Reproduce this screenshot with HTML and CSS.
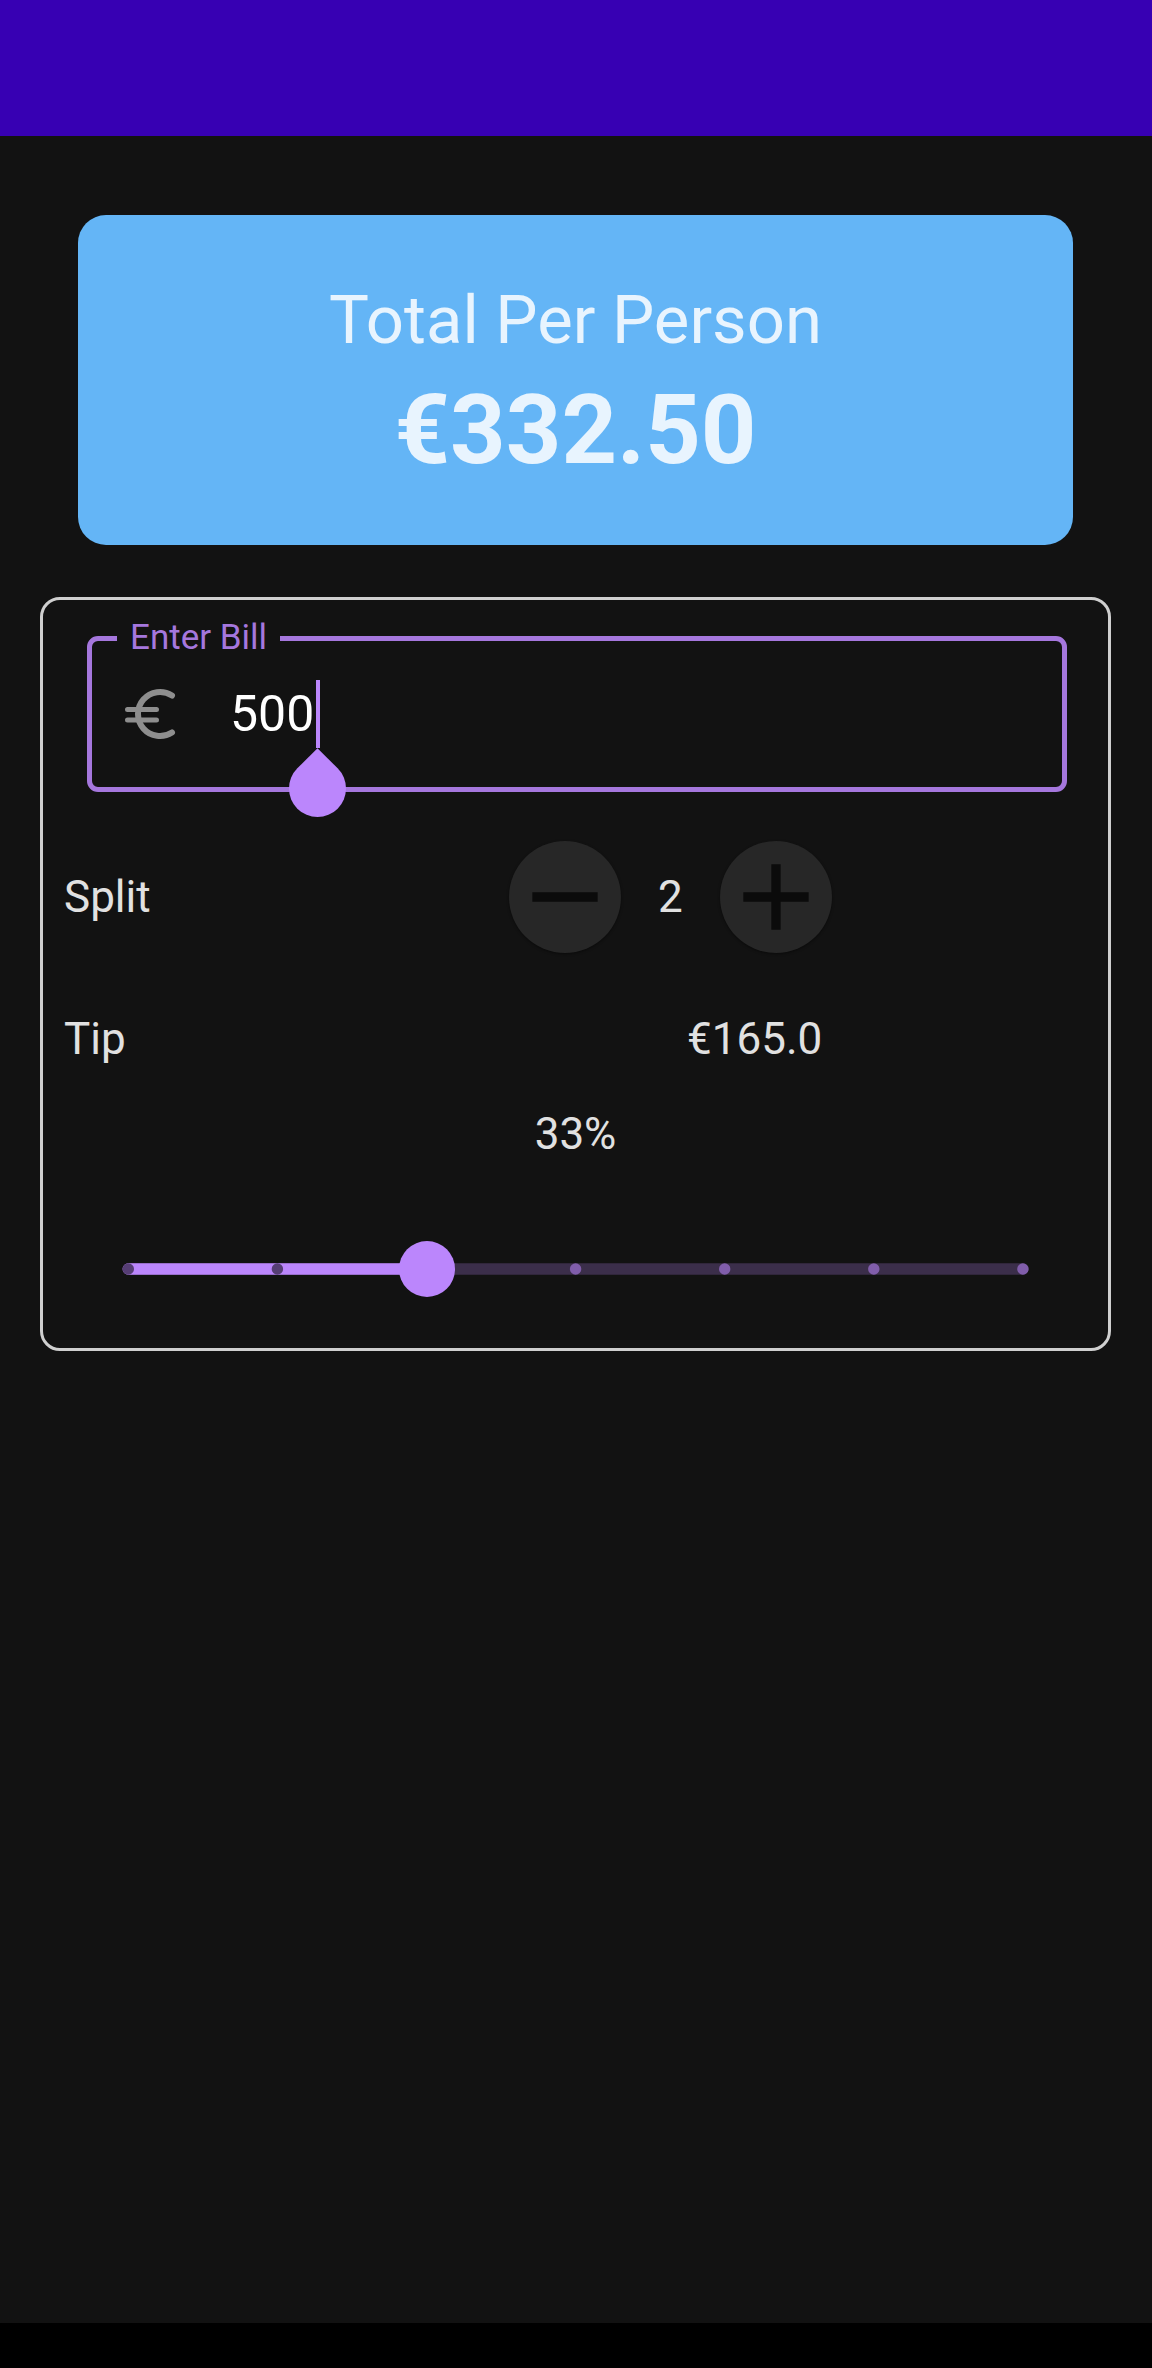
FILE: index.html
```html
<!DOCTYPE html>
<html lang="en">
<head>
<meta charset="utf-8">
<title>Tip Calculator</title>
<link rel="stylesheet" href="styles.css">
</head>
<body>
<div class="screen">
  <header class="topbar"></header>
  <main class="content">
    <section class="total-card">
      <div class="total-label">Total Per Person</div>
      <div class="total-amount">€332.50</div>
    </section>
    <section class="bill-card">
      <div class="bill-field">
        <span class="field-label">Enter Bill</span>
        <svg class="euro-icon" width="52" height="52" viewBox="0 0 52 52" aria-hidden="true">
          <path d="M47.98 7.55 A22 22 0 1 0 47.98 44.45" fill="none" stroke="currentColor" stroke-width="6" stroke-linecap="round"/>
          <path d="M3.5 21.5 H32.5 M3.5 32 H32.5" fill="none" stroke="currentColor" stroke-width="5" stroke-linecap="round"/>
        </svg>
        <span class="field-value">500</span>
        <span class="cursor"><span class="handle"></span></span>
      </div>
      <div class="split-row">
        <span class="row-label split-label">Split</span>
        <div class="stepper">
          <button class="round-btn" aria-label="Decrease">
            <svg width="112" height="112" viewBox="0 0 24 24"><path d="M19 13H5v-2h14v2z"/></svg>
          </button>
          <span class="count">2</span>
          <button class="round-btn" aria-label="Increase">
            <svg width="112" height="112" viewBox="0 0 24 24"><path d="M19 13h-6v6h-2v-6H5v-2h6V5h2v6h6v2z"/></svg>
          </button>
        </div>
      </div>
      <div class="tip-row">
        <span class="row-label tip-label">Tip</span>
        <span class="tip-amount">€165.0</span>
      </div>
      <div class="tip-percent">33%</div>
      <div class="slider">
        <svg width="951" height="56" viewBox="0 0 951 56" aria-hidden="true">
          <line x1="28.3" y1="28" x2="922.9" y2="28" stroke="#3B2E4A" stroke-width="11.4" stroke-linecap="round"/>
          <line x1="28.3" y1="28" x2="327" y2="28" stroke="#BB86FC" stroke-width="11.4" stroke-linecap="round"/>
          <circle cx="28.3" cy="28" r="5.7" fill="#563E74"/>
          <circle cx="177.4" cy="28" r="5.7" fill="#563E74"/>
          <circle cx="326.5" cy="28" r="5.7" fill="#563E74"/>
          <circle cx="475.6" cy="28" r="5.7" fill="#805DAA"/>
          <circle cx="624.7" cy="28" r="5.7" fill="#805DAA"/>
          <circle cx="773.8" cy="28" r="5.7" fill="#805DAA"/>
          <circle cx="922.9" cy="28" r="5.7" fill="#805DAA"/>
          <circle cx="327" cy="28" r="28" fill="#BB86FC"/>
        </svg>
      </div>
    </section>
  </main>
  <footer class="navbar"></footer>
</div>
</body>
</html>
```
FILE: styles.css
```css
html, body {
  margin: 0;
  padding: 0;
  background: #121212;
}

body {
  font-family: Roboto, "Noto Sans", "Liberation Sans", sans-serif;
}

.screen {
  width: 1152px;
  height: 2368px;
  display: flex;
  flex-direction: column;
  overflow: hidden;
}

.topbar {
  flex: none;
  height: 136px;
  background: #3700B3;
}

.content {
  flex: 1;
  display: flex;
  flex-direction: column;
  align-items: flex-start;
  background: #121212;
  padding-top: 79px;
}

.navbar {
  flex: none;
  height: 45px;
  background: #000;
}

/* Total card */
.total-card {
  box-sizing: border-box;
  margin-left: 78px;
  width: 995px;
  height: 330px;
  padding-top: 66px;
  border-radius: 28px;
  background: #64B5F6;
  color: #E8F4FE;
  text-align: center;
}

.total-label {
  font-size: 67px;
  font-weight: 400;
  line-height: normal;
}

.total-amount {
  margin-top: 14px;
  font-size: 97px;
  font-weight: 700;
  line-height: normal;
}

/* Bill card */
.bill-card {
  box-sizing: border-box;
  margin-top: 52px;
  margin-left: 40px;
  width: 1071px;
  border: 3px solid #CFCFCF;
  border-radius: 20px;
  padding: 36px 0 51px 0;
  color: #E1E1E1;
}

.bill-field {
  position: relative;
  box-sizing: border-box;
  margin-left: 44px;
  width: 980px;
  height: 156px;
  border: 5px solid #A577DD;
  border-radius: 11px;
  display: flex;
  align-items: center;
}

.field-label {
  position: absolute;
  top: -24.5px;
  left: 25px;
  padding: 0 13px;
  background: #121212;
  color: #A577DD;
  font-size: 35px;
  line-height: normal;
}

.euro-icon {
  flex: none;
  margin-left: 32px;
  color: #8E8E8E;
}

.field-value {
  margin-left: 54px;
  font-size: 50px;
  line-height: normal;
  color: #FFFFFF;
}

.cursor {
  position: relative;
  flex: none;
  margin-left: 1.5px;
  width: 4px;
  height: 68px;
  background: #BB86FC;
}

.handle {
  position: absolute;
  left: -26.5px;
  top: 79.8px;
  width: 57px;
  height: 57px;
  background: #BB86FC;
  border-radius: 0 50% 50% 50%;
  transform: rotate(45deg);
}

/* Split row */
.split-row {
  margin-top: 49px;
  padding-left: 21px;
  height: 112px;
  display: flex;
  align-items: center;
}

.row-label {
  font-size: 44px;
  line-height: normal;
}

.split-label {
  flex: none;
  width: 445px;
}

.stepper {
  display: flex;
  align-items: center;
}

.round-btn {
  width: 112px;
  height: 112px;
  padding: 0;
  border: none;
  border-radius: 50%;
  background: #272727;
  box-shadow: 0 1px 3px rgba(0, 0, 0, 0.45);
  display: flex;
  align-items: center;
  justify-content: center;
}

.round-btn svg {
  fill: #0B0B0B;
  display: block;
}

.count {
  margin: 0 37px;
  font-size: 44px;
  line-height: normal;
}

/* Tip row */
.tip-row {
  margin-top: 60px;
  padding-left: 21px;
  display: flex;
  align-items: baseline;
}

.tip-label {
  flex: none;
  width: 623px;
}

.tip-amount {
  font-size: 44px;
  line-height: normal;
}

.tip-percent {
  margin-top: 43px;
  text-align: center;
  font-size: 44px;
  line-height: normal;
}

.slider {
  margin-top: 81px;
  margin-left: 57px;
  width: 951px;
  height: 56px;
}

.slider svg {
  display: block;
}
```
